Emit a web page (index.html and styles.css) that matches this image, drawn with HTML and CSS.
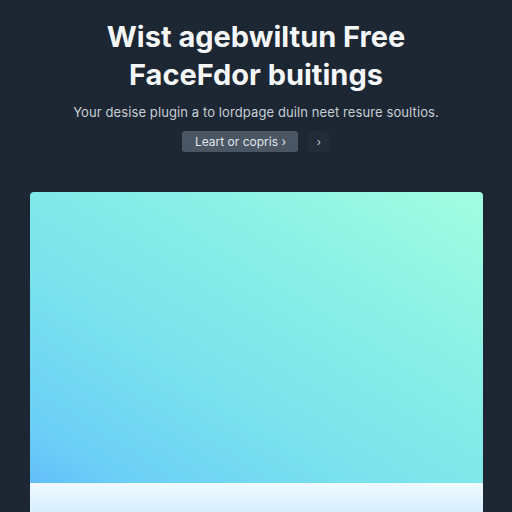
FILE: index.html
```html
<!DOCTYPE html>
<html lang="en">
<head>
  <meta charset="UTF-8" />
  <meta name="viewport" content="width=device-width, initial-scale=1.0"/>
  <title>Free Face</title>
  <link rel="stylesheet" href="styles.css">
</head>
<body>

  <header class="hero">
    <h1 class="hero-title">Wist agebwiltun Free<br>FaceFdor buitings</h1>
    <p class="hero-sub">Your desise plugin a to lordpage duiln neet resure soultios.</p>
    <div class="hero-actions">
      <button class="btn-primary">Leart or copris ›</button>
      <button class="btn-icon">›</button>
    </div>
  </header>

  <section class="preview">
    <div class="preview-strip"></div>
  </section>

</body>
</html>
```

FILE: styles.css
```css
:root {
  --bg: #1c2733;
  --text: #f4f6f8;
  --muted: #c9ced5;
}

* {
  box-sizing: border-box;
}

body {
  margin: 0;
  height: 512px;
  overflow: hidden;
  background-color: var(--bg);
  color: var(--text);
  font-family: 'Inter', 'Noto Sans', sans-serif;
  display: flex;
  flex-direction: column;
  align-items: center;
}

.hero {
  display: flex;
  flex-direction: column;
  align-items: center;
  padding-top: 18px;
}

.hero-title {
  margin: 0;
  font-size: 29px;
  line-height: 38px;
  font-weight: 700;
  letter-spacing: 0;
  text-align: center;
}

.hero-sub {
  margin: 10px 0 0;
  font-size: 13px;
  color: var(--muted);
  letter-spacing: 0.1px;
}

.hero-actions {
  display: flex;
  gap: 10px;
  margin-top: 11px;
}

.btn-primary {
  width: 116px;
  height: 21px;
  padding: 0;
  border: none;
  border-radius: 3px;
  background-color: #4b5665;
  color: #e2e6eb;
  font-family: inherit;
  font-size: 12px;
}

.btn-icon {
  width: 21px;
  height: 21px;
  padding: 0;
  border: none;
  border-radius: 3px;
  background-color: #212c38;
  color: #c9ced5;
  font-family: inherit;
  font-size: 11px;
}

.preview {
  margin-top: 40px;
  width: 453px;
  flex: 1;
  margin-left: 1px;
  border-radius: 4px 4px 0 0;
  background: linear-gradient(212deg, #a2fee0 0%, #8af0e6 30%, #7ae2ed 60%, #6ccff7 85%, #5fb6fb 100%);
  display: flex;
  flex-direction: column;
  justify-content: flex-end;
}

.preview-strip {
  height: 29px;
  background: linear-gradient(180deg, #effaff 0%, #d8eeff 100%);
}
```
